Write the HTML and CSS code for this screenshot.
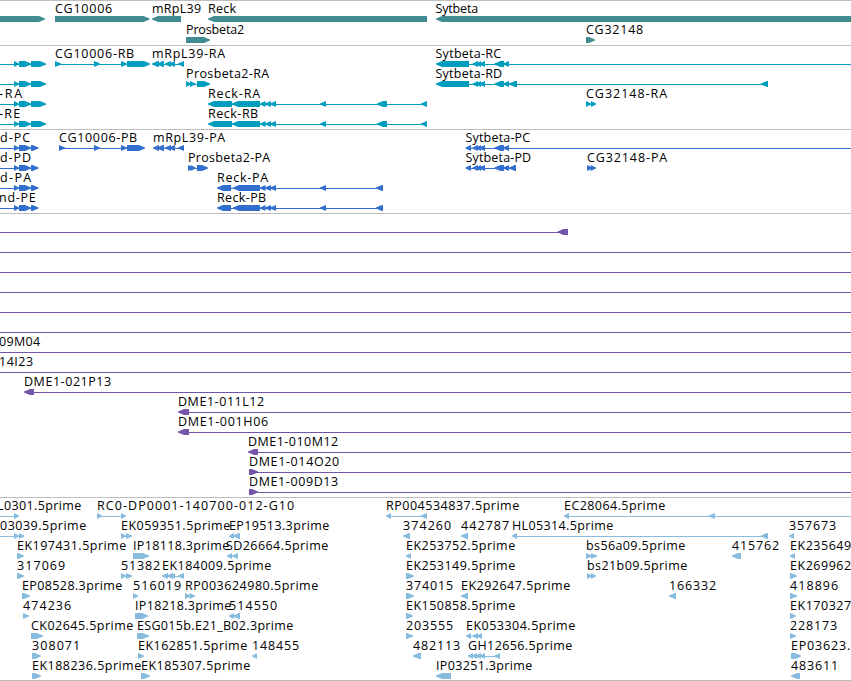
FILE: index.html
```html
<!DOCTYPE html>
<html lang="en">
<head>
<meta charset="utf-8">
<title>Genome tracks</title>
<link rel="stylesheet" href="styles.css">
</head>
<body>
<main class="tracks">
<section class="track genes"><svg id="genes" width="851" height="44"></svg></section>
<section class="track transcripts"><svg id="transcripts" width="851" height="83"></svg></section>
<section class="track proteins"><svg id="proteins" width="851" height="83"></svg></section>
<section class="track clones"><svg id="clones" width="851" height="283"></svg></section>
<section class="track ests"><svg id="ests" width="851" height="182"></svg></section>
</main>
<script src="tracks.js"></script>
</body>
</html>
```
FILE: styles.css
```css
body {
  margin: 0;
  background: #fff;
  overflow: hidden;
}
.tracks {
  display: flex;
  flex-direction: column;
  width: 851px;
  border-bottom: 1px solid #bebebe;
}
.track {
  border-top: 1px solid #bebebe;
}
.track svg {
  display: block;
  overflow: hidden;
}
.track text {
  font: 12.5px "Open Sans", "Noto Sans", sans-serif;
  fill: #000;
}
.genes { color: #408c91; }
.transcripts { color: #009dbf; }
.proteins { color: #326ecd; }
.clones { color: #7456a8; }
.ests { color: #87bcde; }
.feature { fill: currentColor; }
.intron { fill: currentColor; }
```
FILE: tracks.js
```js
// Feature: [row, label, label start, label end, direction, exon list, line start, line end]
const reckTail = [260,265.5, 265,271, 270,276, 320,326];
const tracks = {
  genes: [
    [0, "", 0, 0, 1, [-10,45]],
    [0, "CG10006", 55, 112, 1, [55,149.5]],
    [0, "mRpL39", 152, 201, -1, [152,181]],
    [0, "Reck", 208, 236, -1, [208,427]],
    [0, "Sytbeta", 435.5, 478, -1, [436,860]],
    [1, "Prosbeta2", 186, 244, 1, [186,210]],
    [1, "CG32148", 586, 643, 1, [586,595]]
  ],
  transcripts: [
    [0, "", 0, 0, 1, [14,19, 19,31, 31,46], 0, 46],
    [1, "", 0, 0, 1, [14,19, 19,31, 31,46], 0, 46],
    [2, "-RA", -1, 22, 1, [14,19, 19,31, 31,46], 0, 46],
    [3, "-RE", -1, 20, 1, [14,19, 19,31, 31,46], 0, 46],
    [0, "CG10006-RB", 55, 134, 1, [55,61, 94,100, 121,127, 127,150]],
    [0, "mRpL39-RA", 152, 225, -1, [152,159, 157,164, 165,171, 169,175, 178,184]],
    [1, "Prosbeta2-RA", 186, 269, 1, [186,191, 190,195.5, 197,210]],
    [2, "Reck-RA", 208, 260, -1, [208,232, 232,260, ...reckTail, 377,387, 421,427]],
    [3, "Reck-RB", 208, 258, -1, [208,232, 232,260, ...reckTail, 377,387, 421,427]],
    [0, "Sytbeta-RC", 435.5, 501, -1, [436,469, 472.5,478, 476,481, 479,485, 494.5,504, 503,509], 440, 851],
    [1, "Sytbeta-RD", 435.5, 502, -1, [436,469, 472.5,478, 476,481, 479,485, 494.5,504, 503,509, 509,517, 761,768]],
    [2, "CG32148-RA", 586, 667, 1, [586,591, 591,596]]
  ],
  proteins: [
    [0, "d-PC", 0, 30, 1, [14,19, 19,31, 31,38.5], 0, 38],
    [1, "d-PD", 0, 31, 1, [14,19, 19,31, 31,38.5], 0, 38],
    [2, "d-PA", 0, 31, 1, [14,19, 19,31, 31,38.5], 0, 38],
    [3, "nd-PE", -1, 35.5, 1, [14,19, 19,31, 31,38.5], 0, 38],
    [0, "CG10006-PB", 59, 137, 1, [59,65, 94,100, 121,127, 127,145]],
    [0, "mRpL39-PA", 153, 225, -1, [153,159, 157,164, 165,171, 169,175, 178,184]],
    [1, "Prosbeta2-PA", 188, 270, 1, [188,193, 190.5,195.5, 197,208]],
    [2, "Reck-PA", 217, 268, -1, [217,231, 233,260, ...reckTail, 376,383]],
    [3, "Reck-PB", 217, 266, -1, [217,231, 233,260, ...reckTail, 376,383]],
    [0, "Sytbeta-PC", 465.5, 530, -1, [465.5,471, 472.5,478, 476,481, 479,485, 494.5,504, 503,509], 468, 851],
    [1, "Sytbeta-PD", 465.5, 531, -1, [465.5,471, 472.5,478, 476,481, 479,485, 494.5,504, 503,509, 509,516]],
    [1, "CG32148-PA", 587, 667, 1, [587,592, 590.5,596]]
  ],
  clones: [
    [0, "", 0, 0, -1, [557.5,568], 0, 568],
    [1, "", 0, 0, 1, [], 0, 851],
    [2, "", 0, 0, 1, [], 0, 851],
    [3, "", 0, 0, 1, [], 0, 851],
    [4, "", 0, 0, 1, [], 0, 851],
    [5, "", 0, 0, 1, [], 0, 851],
    [6, "09M04", -1, 40, 1, [], 0, 851],
    [7, "14I23", -1, 33, 1, [], 0, 851],
    [8, "DME1-021P13", 24, 111, -1, [24,34], 28, 851],
    [9, "DME1-011L12", 178, 264, -1, [178,189], 182, 851],
    [10, "DME1-001H06", 178, 268, -1, [178,189], 182, 851],
    [11, "DME1-010M12", 248, 338, -1, [248,258], 252, 851],
    [12, "DME1-014O20", 249, 339, 1, [249,258], 249, 851],
    [13, "DME1-009D13", 249, 338, 1, [249,258], 249, 851]
  ],
  ests: [
    [0, "L0301.5prime", -3, 81, 1, [14,19], 0, 19],
    [0, "RC0-DP0001-140700-012-G10", 97, 294, 1, [97,102, 121,126]],
    [0, "RP004534837.5prime", 386, 519, -1, [386,391, 421,427]],
    [0, "EC28064.5prime", 564, 665, -1, [564,569, 709,715], 566, 851],
    [1, "03039.5prime", 0, 86, 1, [14,19, 19,24], 0, 24],
    [1, "EK059351.5prime", 121, 230, 1, [121,126, 126,132]],
    [1, "EP19513.3prime", 229, 329, -1, [229,234, 233,240]],
    [1, "374260", 403, 451, -1, [403,410]],
    [1, "442787", 461, 509, -1, [461,468]],
    [1, "HL05314.5prime", 512, 613, -1, [512,517, 761,768]],
    [1, "357673", 789, 836, -1, [789,794]],
    [2, "EK197431.5prime", 17, 126, 1, [17,24]],
    [2, "IP18118.3prime", 133, 229, 1, [133,149]],
    [2, "SD26664.5prime", 226, 328, -1, [227,232, 232,238]],
    [2, "EK253752.5prime", 406, 515, -1, [406,411]],
    [2, "bs56a09.5prime", 586, 685, 1, [586,592, 591,597]],
    [2, "415762", 732, 779, -1, [732,741]],
    [2, "EK235649", 790, 851, -1, [790,795]],
    [3, "317069", 17, 65, 1, [17,24]],
    [3, "51382", 121, 160, 1, [121,126, 126,132]],
    [3, "EK184009.5prime", 162, 271, -1, [162,168, 167,173, 171,175, 178,184]],
    [3, "EK253149.5prime", 406, 515, 1, [406,414]],
    [3, "bs21b09.5prime", 587, 687, 1, [587,592, 591,596]],
    [3, "EK269962", 790, 851, 1, [790,797]],
    [4, "EP08528.3prime", 22, 122, 1, [22,30]],
    [4, "516019", 133, 181, 1, [133,138]],
    [4, "RP003624980.5prime", 185, 318, 1, [185,190, 189.5,195]],
    [4, "374015", 406, 453, 1, [406,414]],
    [4, "EK292647.5prime", 461, 570, -1, [461,468]],
    [4, "166332", 669, 716, -1, [669,676]],
    [4, "418896", 790, 838, 1, [790,797]],
    [5, "474236", 23, 71, 1, [23,29]],
    [5, "IP18218.3prime", 135, 231, 1, [135,148]],
    [5, "514550", 229, 277, -1, [229,234, 233,240]],
    [5, "EK150858.5prime", 406, 515, 1, [406,413]],
    [5, "EK170327", 790, 851, 1, [790,796]],
    [6, "CK02645.5prime", 31, 133, 1, [31,43]],
    [6, "ESG015b.E21_B02.3prime", 137, 293, 1, [137,149]],
    [6, "203555", 406, 453, 1, [406,413]],
    [6, "EK053304.5prime", 466, 575, -1, [466,471, 472.5,478, 477,482]],
    [6, "228173", 790, 837, 1, [790,796]],
    [7, "308071", 32, 80, 1, [32,41]],
    [7, "EK162851.5prime", 138, 247, 1, [138,144]],
    [7, "148455", 252, 299, -1, [252,257]],
    [7, "482113", 413, 460, -1, [413,421]],
    [7, "GH12656.5prime", 468, 572, -1, [468,473, 472.5,477, 476,481, 480,485, 494.5,500]],
    [7, "EP03623.3", 791, 858, 1, [791,801]],
    [8, "EK188236.5prime", 32, 141, 1, [32,41]],
    [8, "EK185307.5prime", 141, 250, 1, [141,150]],
    [8, "IP03251.3prime", 436, 532, -1, [436,451]],
    [8, "483611", 791, 838, -1, [791,800]]
  ]
};

const NS = "http://www.w3.org/2000/svg";
function add(parent, name, attrs) {
  const el = document.createElementNS(NS, name);
  for (const key in attrs) el.setAttribute(key, attrs[key]);
  parent.appendChild(el);
  return el;
}

for (const id in tracks) {
  const svg = document.getElementById(id);
  const step = id === "genes" ? 21 : 20;
  for (const [row, label, from, to, dir, exons, lineFrom, lineTo] of tracks[id]) {
    const base = 12 + row * step;
    const top = base + 3;
    const a = lineFrom ?? exons[0] + 2;
    const b = lineTo ?? exons[exons.length - 1] - 2;
    add(svg, "rect", { class: "intron", x: a, y: top + 3, width: b - a, height: 1 });
    for (let i = 0; i < exons.length; i += 2) {
      const s = exons[i], e = exons[i + 1];
      const head = Math.min(e - s, 6);
      const tip = dir > 0 ? e : s;
      const neck = tip - dir * head;
      const tail = dir > 0 ? s : e;
      const d = `M${tail} ${top}H${neck}L${tip} ${top + 2.5}V${top + 3.5}L${neck} ${top + 6}H${tail}Z`;
      add(svg, "path", { class: "feature", d });
    }
    if (label) {
      add(svg, "text", { x: from, y: base, textLength: to - from + 0.2 }).textContent = label;
    }
  }
}
```
